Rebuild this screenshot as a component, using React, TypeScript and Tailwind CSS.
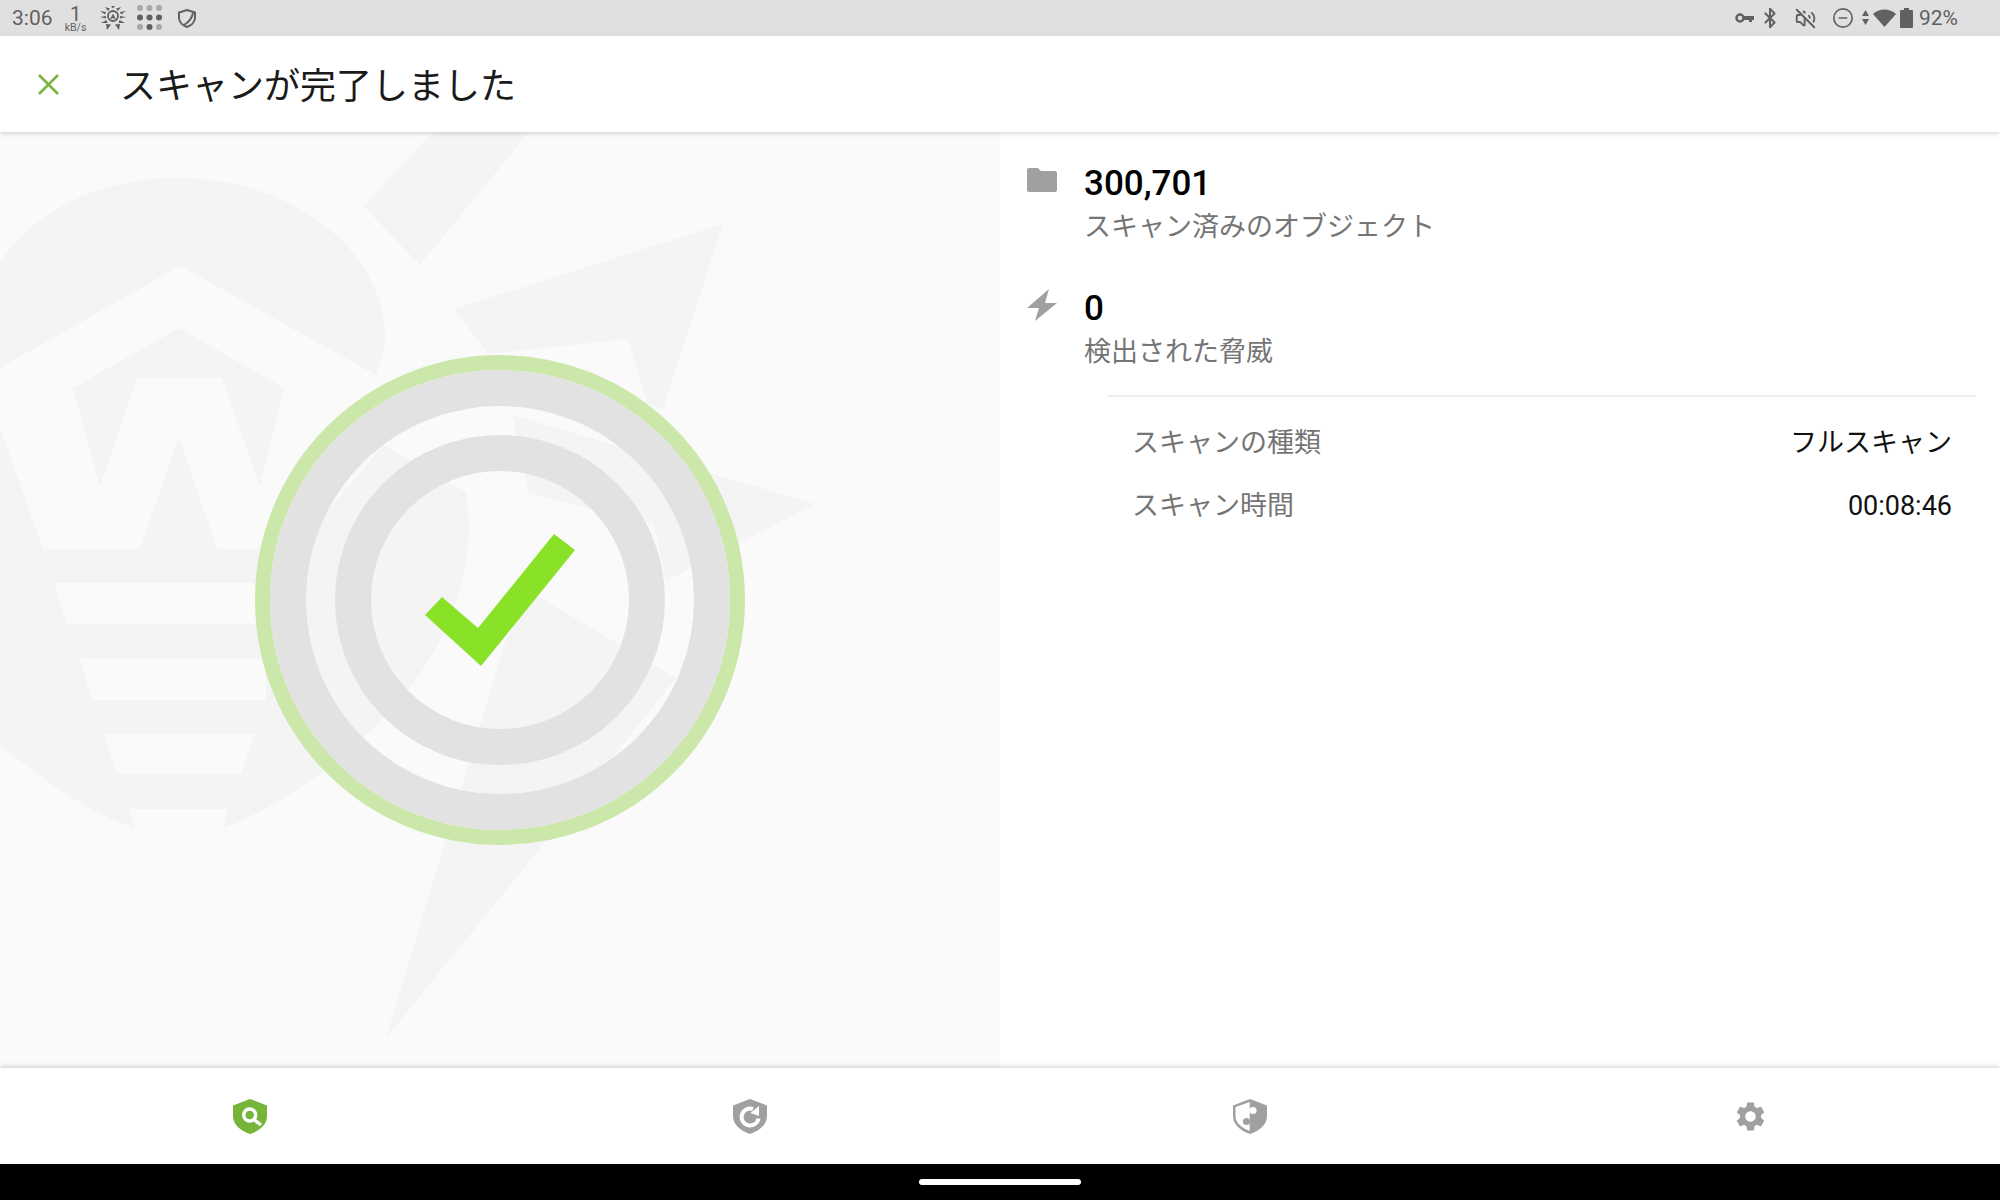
import React from "react";
import { Bluetooth, VolumeOff, CircleMinus } from "lucide-react";
import { MdSettings } from "react-icons/md";

const SHIELD = "M17 0 L34 6.5 V17 C34 26 26 32 17 35 C8 32 0 26 0 17 V6.5 Z";

const Watermark: React.FC = () => (
  <svg className="absolute inset-0 h-full w-full" viewBox="0 132 1000 936" fill="none">
    {/* logo shapes behind the ring */}
    <g fill="#f4f4f4">
      <path d="M434 132 H529 L420 265 L363 206 Z" />
      <path d="M723 224 L454 309 L488 354 L628 339 L647 403 L663 409 Z" />
      <path d="M512 415 L815 504 L666 581 L654 524 L529 494 Z" />
      <path d="M386 1038 L542 846 L676 678 L529 591 L504 645 Z" />
      <path d="M0 262 C40 205 105 178 179 178 C290 178 385 250 385 336 C385 350 380 362 376 375 L180 266 L0 368 Z" />
      <path d="M73 388 L179 328 L284 388 L260 487 L222 378 H137 L100 487 Z" />
      <path d="M0 427 L43 549 H140 L179 436 L217 549 H290 L320 520 L383 445 L466 492 C472 530 470 580 440 640 C400 720 300 800 223 828 L228 809 H129 L135 828 C80 810 40 775 0 746 Z" />
    </g>
    <g fill="#fafafa">
      <path d="M54 583 H300 V624 H67 Z" />
      <path d="M80 659 H265 L266 700 H92 Z" />
      <path d="M104 734 H254 L241 774 H117 Z" />
    </g>
    {/* rings and check */}
    <circle cx="500" cy="600" r="237.5" stroke="#cbe7a9" strokeWidth="15" />
    <circle cx="500" cy="600" r="212" stroke="#e2e2e2" strokeWidth="36" />
    <circle cx="500" cy="600" r="147" stroke="#e2e2e2" strokeWidth="36" />
    <path d="M554 534 L575 550 L481 666 L425 615 L442 597 L478 628 Z" fill="#8ae228" />
  </svg>
);

const DrWebIcon = () => (
  <svg width="26" height="24" viewBox="0 0 26 24" fill="#616161">
    <circle cx="13" cy="10" r="5" fill="none" stroke="#616161" strokeWidth="1.8" />
    <path d="M10 13.5 L13 7.5 L16 13.5 L13 12 Z" />
    <path d="M5 1 L10 2.5 L8 5 Z M21 1 L16 2.5 L18 5 Z M11 0 H15 L13 2.5 Z M0 5 L6 6 L5 8.5 Z M26 5 L20 6 L21 8.5 Z M0 11 L6 10 V12.5 Z M26 11 L20 10 V12.5 Z M1 17 L6.5 14 L7.5 17 Z M25 17 L19.5 14 L18.5 17 Z M7 24 L6 18 L11 18.5 Z M19 24 L20 18 L15 18.5 Z" />
  </svg>
);

const DotsIcon = () => (
  <svg width="26" height="26" viewBox="0 0 26 26">
    {[3, 12.5, 22].map((cy, row) =>
      [3, 12.5, 22].map((cx, col) => (
        <circle
          key={`${row}-${col}`}
          cx={cx}
          cy={cy}
          r="3"
          fill={row === 1 || (row === 2 && col === 1) ? "#5f5f5f" : "#a8a8a8"}
        />
      ))
    )}
  </svg>
);

const StatusBar: React.FC = () => (
  <div className="flex h-[36px] shrink-0 items-center justify-between bg-[#e0e0e0] pl-[12px] pr-[42px] text-[#616161]">
    <div className="flex items-center">
      <span className="text-[21px] leading-none">3:06</span>
      <div className="ml-[11px] flex w-[24px] flex-col items-center pt-[2px] text-[#616161]">
        <span className="text-[20px] leading-[17px]">1</span>
        <span className="text-[10.5px] leading-[9px]">kB/s</span>
      </div>
      <div className="ml-[12px]">
        <DrWebIcon />
      </div>
      <div className="ml-[11px]">
        <DotsIcon />
      </div>
      <svg className="ml-[15px]" width="18" height="19" viewBox="0 0 18 19" fill="none" stroke="#616161" strokeWidth="2">
        <path d="M9 1 L17 3.5 V9 C17 13 13 16.5 9 18 C5 16.5 1 13 1 9 V3.5 Z" />
        <path d="M15 4 C14 9 11 13 6 16" />
      </svg>
    </div>
    <div className="flex items-center">
      <svg width="19" height="12" viewBox="0 0 19 12" fill="none">
        <circle cx="5" cy="6" r="3.5" stroke="#616161" strokeWidth="2.5" />
        <path d="M9 4 H19 V8 H17 V10 H14 V8 H9 Z" fill="#616161" />
      </svg>
      <Bluetooth className="ml-[5px]" size={22} strokeWidth={2.2} />
      <VolumeOff className="ml-[14px]" size={21} strokeWidth={2.2} />
      <CircleMinus className="ml-[16px]" size={22} strokeWidth={1.8} />
      <svg className="ml-[7px]" width="9" height="16" viewBox="0 0 9 16" fill="#616161">
        <path d="M4.5 0 L8 6 H1 Z M1 9 H8 L4.5 15 Z" />
      </svg>
      <svg className="ml-[3px]" width="23" height="18" viewBox="0 0 23 18" fill="#616161">
        <path d="M11.5 18 L0 5 C6 -1 17 -1 23 5 Z" />
      </svg>
      <svg className="ml-[4px]" width="13" height="20" viewBox="0 0 13 20" fill="#616161">
        <path d="M4 0 H9 V2 H12 A1 1 0 0 1 13 3 V19 A1 1 0 0 1 12 20 H1 A1 1 0 0 1 0 19 V3 A1 1 0 0 1 1 2 H4 Z" />
      </svg>
      <span className="ml-[6px] text-[21px] leading-none">92%</span>
    </div>
  </div>
);

const Header: React.FC = () => (
  <div className="relative z-10 flex h-[96px] shrink-0 items-center bg-white shadow-[0_2px_4px_rgba(0,0,0,0.14)]">
    <svg className="ml-[38px]" width="21" height="21" viewBox="0 0 21 21" stroke="#7cb342" strokeWidth="2.6">
      <path d="M1 1 L20 20 M20 1 L1 20" />
    </svg>
    <h1 className="ml-[61px] pt-[5px] text-[36px] font-normal leading-none text-[#1a1a1a]">スキャンが完了しました</h1>
  </div>
);

const Stat: React.FC<{ icon: React.ReactNode; value: string; label: string }> = ({ icon, value, label }) => (
  <div className="flex">
    <div className="flex h-[48px] w-[58px] shrink-0 items-center">{icon}</div>
    <div className="-ml-[1px] pt-[4px]">
      <div className="h-[48px] text-[35px] font-medium leading-[48px] text-black">{value}</div>
      <div className="text-[27px] leading-[39px] text-[#757575]">{label}</div>
    </div>
  </div>
);

const InfoRow: React.FC<{ label: string; value: string }> = ({ label, value }) => (
  <div className="flex h-[63px] items-center justify-between">
    <span className="text-[27px] text-[#757575]">{label}</span>
    <span className="text-[27px] text-[#111111]">{value}</span>
  </div>
);

const ResultsPanel: React.FC = () => (
  <div className="w-[1000px] bg-white pl-[27px] pr-[24px] pt-[24px]">
    <Stat
      value="300,701"
      label="スキャン済みのオブジェクト"
      icon={
        <svg width="30" height="24" viewBox="0 0 30 24" fill="#a0a0a0">
          <path d="M2 0 H11 L14 3 H28 A2 2 0 0 1 30 5 V22 A2 2 0 0 1 28 24 H2 A2 2 0 0 1 0 22 V2 A2 2 0 0 1 2 0 Z" />
        </svg>
      }
    />
    <div className="mt-[34px]">
      <Stat
        value="0"
        label="検出された脅威"
        icon={
          <svg width="30" height="33" viewBox="0 0 30 33" fill="#a0a0a0">
            <path d="M22 0 L18 14 H30 L8 32 L12 19 H0 Z" />
          </svg>
        }
      />
    </div>
    <div className="ml-[81px] mt-[23px] h-[2px] bg-[#eeeeee]" />
    <div className="ml-[105px] mr-[24px] mt-[15px]">
      <InfoRow label="スキャンの種類" value="フルスキャン" />
      <InfoRow label="スキャン時間" value="00:08:46" />
    </div>
  </div>
);

const BottomNav: React.FC = () => (
  <div className="relative z-10 grid h-[96px] shrink-0 grid-cols-4 bg-white shadow-[0_-2px_4px_rgba(0,0,0,0.14)]">
    <div className="flex items-center justify-center">
      <svg width="34" height="35" viewBox="0 0 34 35">
        <path d={SHIELD} fill="#76b53a" />
        <circle cx="16.7" cy="16" r="6" fill="none" stroke="#fff" strokeWidth="3.4" />
        <path d="M21 20.5 L28 26" stroke="#fff" strokeWidth="3.4" />
      </svg>
    </div>
    <div className="flex items-center justify-center">
      <svg width="34" height="35" viewBox="0 0 34 35">
        <path d={SHIELD} fill="#a0a0a0" />
        <path d="M20 10 A8.5 8.5 0 1 0 25.5 19.5" fill="none" stroke="#fff" strokeWidth="4" />
        <path d="M26 7 V17 L17.5 14 Z" fill="#fff" />
      </svg>
    </div>
    <div className="flex items-center justify-center">
      <svg width="34" height="35" viewBox="0 0 34 35">
        <path d={SHIELD} fill="#a0a0a0" />
        <path d="M16.7 3 V32 C9 29 2.5 24 2.5 17 V8 Z" fill="#fff" />
        <circle cx="20" cy="11.5" r="3.6" fill="#fff" />
        <circle cx="13.5" cy="22.5" r="3.6" fill="#a0a0a0" />
      </svg>
    </div>
    <div className="flex items-center justify-center">
      <MdSettings size={35} color="#a0a0a0" />
    </div>
  </div>
);

export default function App() {
  return (
    <div className="flex h-[1200px] w-[2000px] flex-col overflow-hidden bg-white font-['Roboto','Noto_Sans_CJK_JP',sans-serif]">
      <StatusBar />
      <Header />
      <div className="flex flex-1">
        <div className="relative w-[1000px] bg-[#fafafa]">
          <Watermark />
        </div>
        <ResultsPanel />
      </div>
      <BottomNav />
      <div className="flex h-[36px] shrink-0 items-center justify-center bg-black">
        <div className="h-[6px] w-[162px] rounded-full bg-white" />
      </div>
    </div>
  );
}
